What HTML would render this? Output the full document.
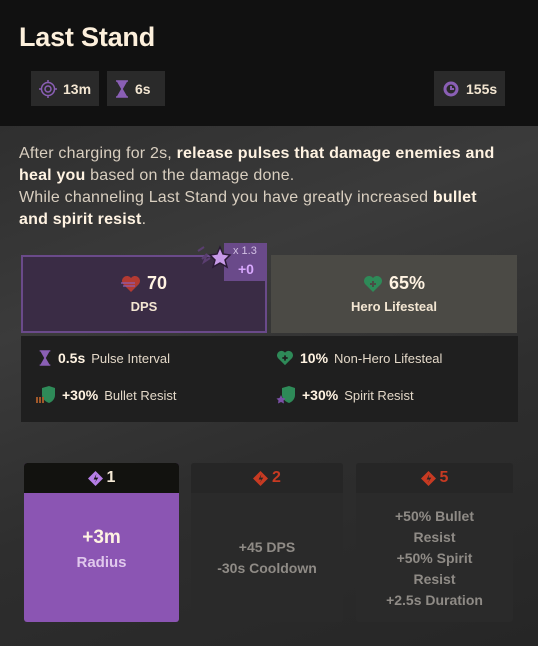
<!DOCTYPE html>
<html><head><meta charset="utf-8"><style>
*{margin:0;padding:0;box-sizing:border-box}
body{width:538px;height:646px;overflow:hidden;font-family:"Liberation Sans",sans-serif;background:#2c2c2c;position:relative;color:#e3d8c8}
.hdr{position:absolute;left:0;top:0;width:538px;height:126px;background:#111}
.title{position:absolute;left:19px;top:22px;font-size:27px;font-weight:bold;color:#fdf0dc;letter-spacing:-0.2px}
.chip{position:absolute;top:71px;height:35px;background:#2a2a2a;display:flex;align-items:center;padding-left:8px;font-weight:bold;font-size:14px;color:#f3e6d2;gap:6px}
.body{position:absolute;left:0;top:126px;width:538px;height:520px;background:linear-gradient(160deg,#2f2f2f 0%,#3b3b3b 30%,#2e2e2e 60%,#262626 100%)}
.desc{position:absolute;left:19px;top:143px;width:530px;font-size:16px;letter-spacing:0.2px;line-height:22px;color:#d9cfc0;white-space:nowrap}
.desc b{color:#fff3e2}
.box{position:absolute;top:255px;height:78px;text-align:center}
.big{font-size:18px;font-weight:bold;color:#fff3e2;margin-top:18px;display:flex;justify-content:center;align-items:center;gap:6px}
.lbl{font-size:13px;font-weight:bold;color:#f3e6d2;margin-top:5px}
.panel{position:absolute;left:21px;top:336px;width:497px;height:86px;background:#1f1f1f}
.row{position:absolute;font-size:13px;display:flex;align-items:center;gap:6px;color:#e3d8c8}
.row b{font-size:14px;color:#fff3e2}
.up{position:absolute;top:463px;height:159px;background:#2a2a2a;border-radius:3px;overflow:hidden;text-align:center}
.uh{height:30px;background:#262626;display:flex;justify-content:center;align-items:center;gap:4px;font-weight:bold;font-size:16px;color:#c73a22}
.ub{font-size:14px;font-weight:bold;color:#8f8b86;line-height:21px}
</style></head><body>
<div class="hdr">
<div class="title">Last Stand</div>
<div class="chip" style="left:31px;width:68px"><svg width="18" height="18" viewBox="0 0 18 18"><circle cx="9" cy="9" r="6.5" fill="none" stroke="#8a5fb5" stroke-width="1.5"/><circle cx="9" cy="9" r="3" fill="none" stroke="#8a5fb5" stroke-width="1.5"/><path d="M9 0v3M9 15v3M0 9h3M15 9h3" stroke="#8a5fb5" stroke-width="1.5"/></svg>13m</div>
<div class="chip" style="left:107px;width:58px"><svg width="14" height="18" viewBox="0 0 14 18"><path d="M1 1h12M1 17h12M3 2l4 7-4 7h8l-4-7 4-7z" fill="#8a5fb5" stroke="#8a5fb5" stroke-width="1.5"/></svg>6s</div>
<div class="chip" style="left:434px;width:71px"><svg width="18" height="18" viewBox="0 0 18 18"><circle cx="9" cy="9" r="7.5" fill="#8a5fb5"/><circle cx="9" cy="9" r="4.5" fill="#2a2a2a"/><path d="M9 6v3h3" stroke="#8a5fb5" stroke-width="2" fill="none"/></svg>155s</div>
</div>
<div class="body"></div>
<div class="desc">After charging for 2s, <b>release pulses that damage enemies and</b><br><b>heal you</b> based on the damage done.<br>While channeling Last Stand you have greatly increased <b>bullet</b><br><b>and spirit resist</b>.</div>

<div class="box" style="left:21px;width:246px;background:#3a2c45;border:2px solid #6a4a8a">
<div class="big" style="margin-top:16px"><svg width="20" height="18" viewBox="0 0 20 18"><path d="M10 17L2 9A4.5 4.5 0 0 1 10 3a4.5 4.5 0 0 1 8 6z" fill="#b33a32"/><path d="M0 8h14M2 11h12" stroke="#8a5fb5" stroke-width="1.2"/></svg>70</div>
<div class="lbl">DPS</div></div>
<div style="position:absolute;left:224px;top:243px;width:43px;height:38px;background:#6a4a8a"></div>
<div style="position:absolute;left:233px;top:245px;font-size:11px;color:#d2c0e4">x 1.3</div>
<div style="position:absolute;left:238px;top:261px;font-size:14px;font-weight:bold;color:#d9a8ff">+0</div>
<svg style="position:absolute;left:196px;top:243px" width="40" height="30" viewBox="0 0 40 30"><path d="M2 8l6-4M6 16l5-5-3 8 6-4" stroke="#5a3e70" stroke-width="2" fill="none"/><path d="M24 4l3 7 7 1-5 5 2 7-7-4-7 4 2-7-5-5 7-1z" fill="#c79ae8" stroke="#2a1a35" stroke-width="1.5"/></svg>

<div class="box" style="left:271px;width:246px;background:#4b4a45">
<div class="big"><svg width="20" height="18" viewBox="0 0 20 18"><path d="M10 17L2 9A4.5 4.5 0 0 1 10 3a4.5 4.5 0 0 1 8 6z" fill="#2e8a58"/><path d="M10 6v6M7 9h6" stroke="#4b4a45" stroke-width="2"/></svg>65%</div>
<div class="lbl">Hero Lifesteal</div></div>

<div class="panel"></div>
<div class="row" style="left:38px;top:350px"><svg width="14" height="16" viewBox="0 0 14 18"><path d="M1 1h12M1 17h12M3 2l4 7-4 7h8l-4-7 4-7z" fill="#8a5fb5" stroke="#8a5fb5" stroke-width="1.5"/></svg><b>0.5s</b> Pulse Interval</div>
<div class="row" style="left:276px;top:350px"><svg width="18" height="16" viewBox="0 0 20 18"><path d="M10 17L2 9A4.5 4.5 0 0 1 10 3a4.5 4.5 0 0 1 8 6z" fill="#2e8a58"/><path d="M10 6v6M7 9h6" stroke="#1f1f1f" stroke-width="2"/></svg><b>10%</b> Non-Hero Lifesteal</div>
<div class="row" style="left:36px;top:386px"><svg width="20" height="18" viewBox="0 0 20 18"><path d="M6 2l7-2 6 2v7c0 4-3 7-6 8-3-1-7-4-7-8z" fill="#2e8a58"/><path d="M1 17v-6M4 17v-6M7 17v-6" stroke="#a0582a" stroke-width="2"/></svg><b>+30%</b> Bullet Resist</div>
<div class="row" style="left:276px;top:386px"><svg width="20" height="18" viewBox="0 0 20 18"><path d="M6 2l7-2 6 2v7c0 4-3 7-6 8-3-1-7-4-7-8z" fill="#2e8a58"/><path d="M5 9l1.5 3 3 .5-2 2 .5 3-3-1.5-3 1.5.5-3-2-2 3-.5z" fill="#7a4fa5"/></svg><b>+30%</b> Spirit Resist</div>

<div class="up" style="left:24px;width:155px;background:#8b55b3">
<div class="uh" style="background:#12120f;color:#f5ead6"><svg width="15" height="15" viewBox="0 0 16 16"><path d="M8 0l8 8-8 8-8-8z" fill="#b57ee6"/><path d="M9 3L6 9h3l-2 4 4-6H8z" fill="#12120f"/></svg>1</div>
<div style="margin-top:34px;font-size:19px;font-weight:bold;color:#fff3e2">+3m</div>
<div style="margin-top:5px;font-size:15px;font-weight:bold;color:#e0c8ec">Radius</div></div>

<div class="up" style="left:191px;width:152px">
<div class="uh"><svg width="15" height="15" viewBox="0 0 16 16"><path d="M8 0l8 8-8 8-8-8z" fill="#c73a22"/><path d="M9 3L6 9h3l-2 4 4-6H8z" fill="#262626"/></svg>2</div>
<div class="ub" style="margin-top:44px">+45 DPS<br>-30s Cooldown</div></div>

<div class="up" style="left:356px;width:157px">
<div class="uh"><svg width="15" height="15" viewBox="0 0 16 16"><path d="M8 0l8 8-8 8-8-8z" fill="#c73a22"/><path d="M9 3L6 9h3l-2 4 4-6H8z" fill="#262626"/></svg>5</div>
<div class="ub" style="margin-top:13px">+50% Bullet<br>Resist<br>+50% Spirit<br>Resist<br>+2.5s Duration</div></div>
</body></html>
